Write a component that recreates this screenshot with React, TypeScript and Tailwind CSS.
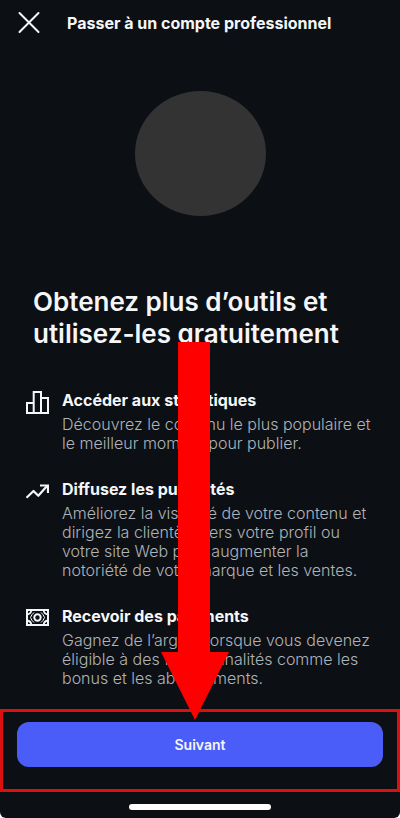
import type { ReactNode } from 'react';

type Feature = {
  title: string;
  description: string;
  icon: ReactNode;
};

const iconProps = {
  width: 24,
  height: 24,
  viewBox: '0 0 24 24',
  fill: 'none',
  stroke: 'currentColor',
  strokeWidth: 2,
  'aria-hidden': true,
};

const ChartIcon = () => (
  <svg {...iconProps}>
    <path d="M2 23V13H8.7V23ZM8.7 23V2H16V23ZM16 23V8H23V23Z" />
  </svg>
);

const TrendIcon = () => (
  <svg {...iconProps}>
    <path d="M1.5 18.8L8.5 12L13.3 16.8L22 7" strokeWidth="2.2" strokeLinejoin="round" />
    <path d="M15 6.5H23V14" strokeWidth="2.2" />
  </svg>
);

const CashIcon = () => (
  <svg {...iconProps}>
    <rect x="2" y="4" width="21" height="15" />
    <circle cx="12.5" cy="11.5" r="3.2" />
    <path d="M2 8.5Q6 8 6.5 4M18.5 4Q19 8 23 8.5M2 14.5Q6 15 6.5 19M18.5 19Q19 15 23 14.5" strokeWidth="1.8" />
    <path d="M9 6.5Q6.5 8.5 5.5 11.5Q6.5 14.5 9 16.5M16 6.5Q18.5 8.5 19.5 11.5Q18.5 14.5 16 16.5" strokeWidth="1" />
  </svg>
);

const FEATURES: Feature[] = [
  {
    title: 'Accéder aux statistiques',
    description: 'Découvrez le contenu le plus populaire et le meilleur moment pour publier.',
    icon: <ChartIcon />,
  },
  {
    title: 'Diffusez les publicités',
    description:
      'Améliorez la visibilité de votre contenu et dirigez la clientèle vers votre profil ou votre site Web pour augmenter la notoriété de votre marque et les ventes.',
    icon: <TrendIcon />,
  },
  {
    title: 'Recevoir des paiements',
    description:
      'Gagnez de l’argent lorsque vous devenez éligible à des fonctionnalités comme les bonus et les abonnements.',
    icon: <CashIcon />,
  },
];

const App = () => {
  return (
    <div className="bg-white">
      <div className="relative flex min-h-screen flex-col rounded-b-md bg-[#0c1014] font-['Inter',sans-serif] text-[#f5f6f8]">
        {/* Header */}
        <header className="flex h-[46px] items-center gap-[26px] px-[17px]">
          <button type="button" aria-label="Fermer">
            <svg width="24" height="24" viewBox="0 0 24 24" fill="none" stroke="currentColor" strokeWidth="2" strokeLinecap="round">
              <path d="M2.5 2L21.5 21M21.5 2L2.5 21" />
            </svg>
          </button>
          <h1 className="text-base font-bold">Passer à un compte professionnel</h1>
        </header>

        <main className="flex-1">
          {/* Profile picture placeholder */}
          <div className="mx-auto mt-[45px] h-[125px] w-[131px] rounded-[50%] bg-[#333333]"></div>

          <h2 className="mt-[70px] px-[33px] text-[26px] leading-8 font-semibold">
            Obtenez plus d’outils et utilisez-les gratuitement
          </h2>

          {/* Feature list */}
          <ul className="mt-10 flex flex-col gap-[26px] px-[25px]">
            {FEATURES.map(feature => (
              <li key={feature.title} className="flex gap-[13px]">
                <span className="shrink-0">{feature.icon}</span>
                <div>
                  <h3 className="text-base leading-5 font-bold">{feature.title}</h3>
                  <p className="mt-[5px] text-base leading-[19px] font-light text-[#afb3ba]">{feature.description}</p>
                </div>
              </li>
            ))}
          </ul>
        </main>

        {/* Highlighted action */}
        <footer className="mt-5">
          <div className="border-[3px] border-[#dc1010] px-[14px] pt-[10px] pb-[22px]">
            <button type="button" className="h-[45px] w-full rounded-xl bg-[#4a5df9] text-sm font-semibold">
              Suivant
            </button>
          </div>
          <div className="mx-auto mt-3 mb-2 h-[6px] w-[142px] rounded-full bg-white"></div>
        </footer>

        {/* Arrow pointing at the button */}
        <svg
          className="pointer-events-none absolute top-[342px] left-[161px]"
          width="68"
          height="378"
          viewBox="0 0 68 378"
          fill="#ff0000"
          aria-hidden="true"
        >
          <path d="M17 0H49V310H68L34 378L0 310H17Z" />
        </svg>
      </div>
    </div>
  );
};

export default App;
